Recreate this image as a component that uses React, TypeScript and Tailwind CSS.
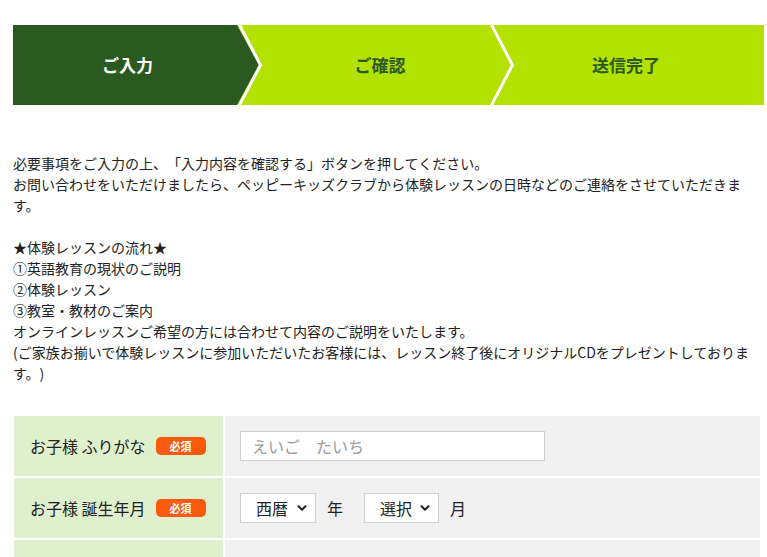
import React from 'react';

const font = { fontFamily: '"Noto Sans CJK JP", "Noto Sans", sans-serif' };

function Steps() {
  return (
    <div className="relative flex h-[80px] ml-[13px] w-[751px] text-[17px] font-bold">
      <div className="w-[224px] bg-[#2b5a20] text-white flex items-center justify-center pl-[5px]">ご入力</div>
      <div className="flex-1 bg-[#b3e100] text-[#2b5a20] flex items-center justify-center pl-[20px]">ご確認</div>
      <div className="flex-1 bg-[#b3e100] text-[#2b5a20] flex items-center justify-center pr-[15px]">送信完了</div>
      {/* chevrons between steps */}
      <svg className="absolute top-0 left-[222px] h-[80px] w-[32px]" viewBox="0 0 32 80">
        <polygon points="0,0 2,0 24,40 2,80 0,80" fill="#2b5a20" />
        <polyline points="3.5,-2 25.5,40 3.5,82" fill="none" stroke="#fff" strokeWidth="3" />
      </svg>
      <svg className="absolute top-0 left-[474px] h-[80px] w-[32px]" viewBox="0 0 32 80">
        <polyline points="3.5,-2 25.5,40 3.5,82" fill="none" stroke="#fff" strokeWidth="3" />
      </svg>
    </div>
  );
}

function Required() {
  return (
    <span className="ml-[10px] inline-flex items-center justify-center w-[50px] h-[18px] rounded-[5px] bg-[#fa5a0a] text-white text-[11px] font-bold">
      必須
    </span>
  );
}

function Chevron() {
  return (
    <svg className="w-[10px] h-[10px]" viewBox="0 0 10 10" fill="none">
      <path d="M1.5 3.2 L5 6.7 L8.5 3.2" stroke="#222" strokeWidth="2" strokeLinecap="round" strokeLinejoin="round" />
    </svg>
  );
}

function Select({ label, width }: { label: string; width: string }) {
  return (
    <div className={`${width} h-[30px] bg-white border border-[#cfcfcf] flex items-center justify-between pl-[15px] pr-[8px] text-[#222]`}>
      <span>{label}</span>
      <Chevron />
    </div>
  );
}

export default function App() {
  return (
    <div className="bg-white min-h-screen pt-[25px] text-[#222] [text-spacing-trim:space-all]" style={font}>
      <Steps />

      <div className="ml-[13px] w-[751px] mt-[48px] text-[14px] leading-[21px]">
        <p>必要事項をご入力の上、「入力内容を確認する」ボタンを押してください。</p>
        <p>お問い合わせをいただけましたら、ペッピーキッズクラブから体験レッスンの日時などのご連絡をさせていただきます。</p>
        <p>&nbsp;</p>
        <p>★体験レッスンの流れ★</p>
        <p>①英語教育の現状のご説明</p>
        <p>②体験レッスン</p>
        <p>③教室・教材のご案内</p>
        <p>オンラインレッスンご希望の方には合わせて内容のご説明をいたします。</p>
        <p>(ご家族お揃いで体験レッスンに参加いただいたお客様には、レッスン終了後にオリジナルCDをプレゼントしております。)</p>
      </div>

      <div className="ml-[14px] w-[746px] mt-[32px] grid grid-cols-[209px_1fr] gap-[2px] text-[16px]">
        <div className="h-[60px] bg-[#dff0cd] flex items-center pl-[16px]">
          お子様 ふりがな<Required />
        </div>
        <div className="h-[60px] bg-[#f1f1f1] flex items-center pl-[15px]">
          <div className="w-[305px] h-[30px] bg-white border border-[#cfcfcf] flex items-center pl-[11px] text-[#9a9a9a]">
            えいご　たいち
          </div>
        </div>

        <div className="h-[60px] bg-[#dff0cd] flex items-center pl-[16px]">
          お子様 誕生年月<Required />
        </div>
        <div className="h-[60px] bg-[#f1f1f1] flex items-center pl-[15px]">
          <Select label="西暦" width="w-[76px]" />
          <span className="ml-[11px] mr-[21px]">年</span>
          <Select label="選択" width="w-[75px]" />
          <span className="ml-[11px]">月</span>
        </div>

        <div className="h-[60px] bg-[#dff0cd]" />
        <div className="h-[60px] bg-[#f1f1f1]" />
      </div>
    </div>
  );
}
